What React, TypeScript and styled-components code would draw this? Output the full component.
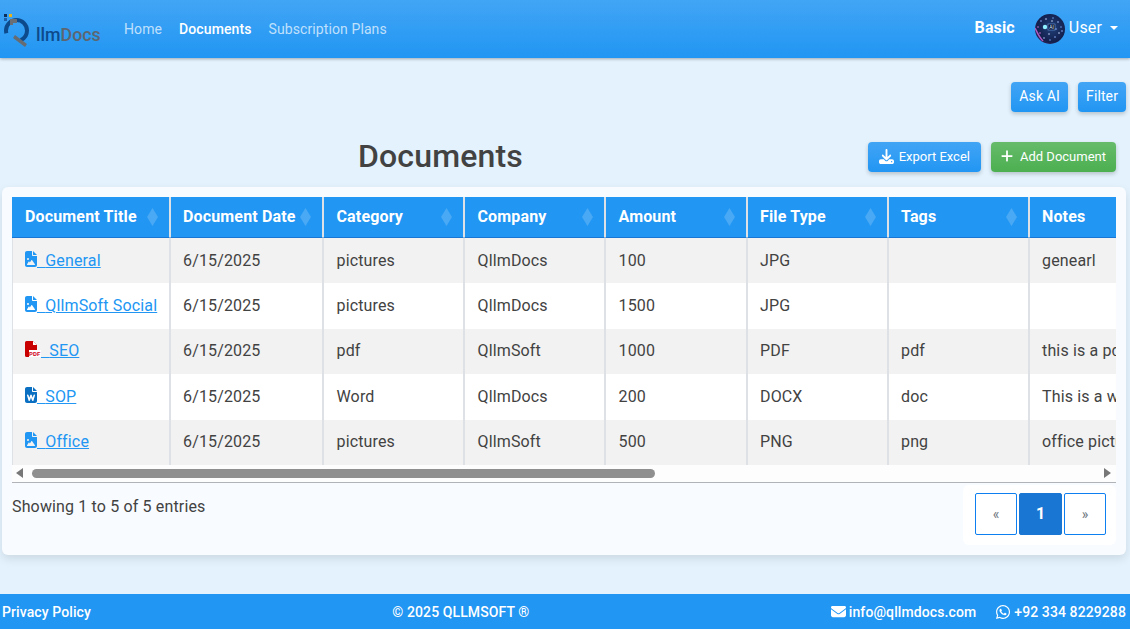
import React from "react";
import styled, { createGlobalStyle } from "styled-components";
import { FaDownload, FaEnvelope, FaFileImage, FaFileWord, FaPlus, FaWhatsapp } from "react-icons/fa6";

const Global = createGlobalStyle`
  html, body { margin: 0; padding: 0; height: 100%; overflow: hidden; }
  body { font-family: Roboto, "Liberation Sans", sans-serif; background: #e3f2fd; color: #424242; letter-spacing: .15px; }
  #root { height: 629px; }
  * { box-sizing: border-box; }
`;

const Page = styled.div`
  display: flex; flex-direction: column; height: 629px; width: 1130px;
`;
const Header = styled.header`
  height: 58px; flex: none; display: flex; align-items: center; padding: 0 12px 0 3px;
  background: linear-gradient(180deg, #42a5f5, #2196f3);
  box-shadow: 0 1px 3px rgba(0,0,0,.3);
`;
const Logo = styled.div`
  display: flex; align-items: flex-end; width: 97px; height: 36px; position: relative;
`;
const LogoText = styled.span`
  font-size: 17.8px; font-weight: 500; line-height: 1; margin-left: 33px; margin-bottom: 3px; color: #0d4a8c; letter-spacing: 0;
  & b { font-weight: 500; color: #5d6670; }
`;
const LogoMark = styled.svg`
  position: absolute; left: 0; top: 0;
`;
const Nav = styled.nav`
  display: flex; gap: 17px; margin-left: 24px; font-size: 14px; font-weight: 400;
`;
const NavLink = styled.a<{ $active?: boolean }>`
  color: ${(p) => (p.$active ? "#ffffff" : "rgba(255,255,255,.7)")};
  font-weight: ${(p) => (p.$active ? 500 : 400)};
  letter-spacing: .1px;
`;
const HeaderRight = styled.div`
  margin-left: auto; display: flex; align-items: center; color: #fff;
`;
const Plan = styled.span`
  font-weight: 700; font-size: 16px; margin-right: 20px; padding-bottom: 3px;
`;
const Avatar = styled.svg`
  width: 30px; height: 30px; border-radius: 50%; margin-right: 4px; display: block;
`;
const UserName = styled.span`
  font-size: 16px; margin-right: 8px; padding-bottom: 3px;
`;
const Caret = styled.span`
  width: 0; height: 0; margin-bottom: 3px; border-left: 4.5px solid transparent; border-right: 4.5px solid transparent; border-top: 4.5px solid #fff;
`;
const Main = styled.main`
  flex: 1; padding: 24px 4px 0 2px; display: flex; flex-direction: column;
`;
const TopActions = styled.div`
  display: flex; justify-content: flex-end; gap: 10px;
`;
const Btn = styled.button<{ $green?: boolean }>`
  height: 30px; border: none; border-radius: 4px; padding: 0 8px 2px; color: #fff; font-family: inherit;
  font-size: 14px; font-weight: 400; letter-spacing: .1px; display: inline-flex; align-items: center; justify-content: center; gap: 6px;
  background: ${(p) => (p.$green ? "linear-gradient(180deg,#66bb6a,#4caf50)" : "linear-gradient(180deg,#42a5f5,#2196f3)")};
  box-shadow: 0 2px 4px rgba(0,0,0,.2);
`;
const AskButton = styled(Btn)`
  min-width: 57px;
`;
const ExportButton = styled(Btn)`
  font-size: 13px; letter-spacing: 0; padding: 0 11px 2px; gap: 5px;
  & svg { flex: none; }
`;
const AddButton = styled(Btn)`
  font-size: 13px; letter-spacing: 0; padding: 0 10px 2px 9px;
  & svg { flex: none; }
`;
const TitleRow = styled.div`
  display: flex; align-items: center; margin-top: 30px; padding-right: 10px; height: 30px;
`;
const Title = styled.h1`
  margin: 0 0 2px 356px; font-size: 32px; font-weight: 500; color: #424242; line-height: 30px;
`;
const TitleActions = styled.div`
  margin-left: auto; display: flex; gap: 10px;
`;
const Card = styled.section`
  margin-top: 15px; height: 368px; background: #f8fbff; border-radius: 6px; padding: 10px;
  box-shadow: 0 4px 10px rgba(0,0,0,.1);
`;
const TableClip = styled.div`
  overflow: hidden; width: 1104px; background: #fff;
`;
const Table = styled.table`
  border-collapse: separate; border-spacing: 0; table-layout: fixed; width: 1258px;
`;
const Th = styled.th`
  height: 41px; padding: 0 11px 2px 12px; background: #2196f3; color: #fff; font-size: 16px; font-weight: 700; text-align: left;
  border-left: 1px solid #dee2e6; border-right: 1px solid #dee2e6; border-bottom: 1px solid #1976d2;
  &:first-child { border-left: none; padding-left: 13px; }
  &:nth-child(n+3):nth-child(-n+5) { padding-left: 12.5px; }
`;
const ThInner = styled.div`
  display: flex; align-items: center; justify-content: space-between;
`;
const SortIcon = styled.span`
  width: 11px; height: 18px; flex: none; background: rgba(255,255,255,.18); margin-top: 2px;
  clip-path: polygon(50% 0, 100% 50%, 50% 100%, 0 50%);
`;
const Row = styled.tr<{ $odd?: boolean }>`
  background: ${(p) => (p.$odd ? "#f2f2f2" : "#ffffff")};
`;
const Td = styled.td`
  height: 45.4px; padding: 0 12px 1px 12px; font-size: 16px; color: #424242; white-space: nowrap; overflow: hidden;
  border-left: 1px solid #dee2e6; border-right: 1px solid #dee2e6;
  &:nth-child(n+3):nth-child(-n+5) { padding-left: 12.5px; }
`;
const DocLink = styled.a`
  color: #2196f3; text-decoration: underline; white-space: pre;
  & svg { vertical-align: -1px; width: 12px; height: 16px; }
`;
const PdfGlyph = styled.svg`
  vertical-align: -2px;
  a & { width: 16px; height: 16px; }
`;
const ScrollBar = styled.div`
  display: flex; align-items: center; height: 17px; width: 1104px; background: #fdfdfd;
`;
const ArrowLeft = styled.span`
  width: 0; height: 0; margin-left: 4px; border-top: 5px solid transparent; border-bottom: 5px solid transparent; border-right: 7px solid #777;
`;
const Thumb = styled.div`
  width: 623px; height: 9px; margin-left: 9px; border-radius: 5px; background: #8f8f8f;
`;
const ArrowRight = styled.span`
  width: 0; height: 0; margin-left: auto; margin-right: 5px; border-top: 5px solid transparent; border-bottom: 5px solid transparent; border-left: 7px solid #777;
`;
const Foot = styled.div`
  width: 1104px; border-top: 1px solid #b0b4b8; display: flex; justify-content: space-between; align-items: flex-start;
`;
const Info = styled.div`
  font-size: 16px; color: #424242; margin-top: 14px;
`;
const Pager = styled.div`
  display: flex; gap: 2px; padding: 8px 10px 10px 12px; margin-top: 2px; background: #fff; border-radius: 6px;
`;
const PageBtn = styled.button<{ $active?: boolean }>`
  width: ${(p) => (p.$active ? "43px" : "42px")}; height: 42px; border-radius: 2px; font-family: inherit; padding: 0;
  border: 1px solid ${(p) => (p.$active ? "#1976d2" : "#0d7ff0")};
  background: ${(p) => (p.$active ? "#1976d2" : "#fff")};
  color: ${(p) => (p.$active ? "#fff" : "#6c757d")};
  font-size: ${(p) => (p.$active ? "16px" : "14px")};
  font-weight: ${(p) => (p.$active ? 700 : 400)};
`;
const Footer = styled.footer`
  flex: none; height: 35px; background: #2196f3; color: #fff; display: flex; align-items: center;
  justify-content: space-between; padding: 0 4px 0 2px; font-size: 14px; font-weight: 500; letter-spacing: .1px;
`;
const Contacts = styled.div`
  display: flex; gap: 19px;
`;
const Contact = styled.span`
  display: inline-flex; align-items: center; gap: 3px;
`;

const PdfIcon = () => (
  <PdfGlyph viewBox="0 0 16 16">
    <path d="M1.5 0H8l4 4v12H1.5A1.5 1.5 0 0 1 0 14.5v-13A1.5 1.5 0 0 1 1.5 0z" fill="#c90000" />
    <path d="M8 0l4 4H8z" fill="#fff" />
    <rect x="4" y="9" width="12" height="7" fill="#fff" />
    <text x="4" y="15.4" fontSize="6" fontWeight="700" fill="#d0021b" fontFamily="Roboto, sans-serif">PDF</text>
  </PdfGlyph>
);

const WordIcon = () => <FaFileWord color="#0b6fc2" />;
const ImgIcon = () => <FaFileImage color="#2196f3" />;

const columns = [
  ["Document Title", 158],
  ["Document Date", 153],
  ["Category", 141],
  ["Company", 141],
  ["Amount", 142],
  ["File Type", 141],
  ["Tags", 141],
  ["Notes", 241],
] as const;

const rows = [
  { icon: <ImgIcon />, title: "General", cat: "pictures", co: "QllmDocs", amt: "100", type: "JPG", tags: "", notes: "genearl" },
  { icon: <ImgIcon />, title: "QllmSoft Social", cat: "pictures", co: "QllmDocs", amt: "1500", type: "JPG", tags: "", notes: "" },
  { icon: <PdfIcon />, title: "SEO", cat: "pdf", co: "QllmSoft", amt: "1000", type: "PDF", tags: "pdf", notes: "this is a pdf file" },
  { icon: <WordIcon />, title: "SOP", cat: "Word", co: "QllmDocs", amt: "200", type: "DOCX", tags: "doc", notes: "This is a word file" },
  { icon: <ImgIcon />, title: "Office", cat: "pictures", co: "QllmSoft", amt: "500", type: "PNG", tags: "png", notes: "office pictures" },
];

const stars = [
  [6, 7, "#8fb4ff"], [11, 5, "#c8d8ff"], [18, 4, "#6f9be8"], [23, 8, "#a9c6ff"], [26, 13, "#6f9be8"],
  [24, 19, "#c8d8ff"], [20, 23, "#8fb4ff"], [15, 26, "#6f9be8"], [9, 24, "#a9c6ff"], [5, 19, "#d070d8"],
  [3, 13, "#d070d8"], [14, 20, "#c8d8ff"], [21, 15, "#8fb4ff"], [17, 7, "#c8d8ff"], [27, 17, "#8fb4ff"],
] as const;

export default function App() {
  return (
    <Page>
      <Global />
      <Header>
        <Logo>
          <LogoMark width="30" height="36" viewBox="0 0 30 36">
            <rect x="1" y="3" width="3" height="3" fill="#0d2f5c" />
            <rect x="6" y="3" width="3" height="3" fill="#e8b21a" />
            <rect x="1" y="7" width="3" height="3" fill="#1d5fa8" />
            <circle cx="13.5" cy="19.5" r="10.5" fill="none" stroke="#0d4a8c" strokeWidth="4" strokeDasharray="48 18" strokeDashoffset="-30" />
            <path d="M7 8h7v4H10v2H7z" fill="#6a6f75" />
            <path d="M12 24l12 9-2 3-12-9z" fill="#666c72" />
          </LogoMark>
          <LogoText>llm<b>Docs</b></LogoText>
        </Logo>
        <Nav>
          <NavLink>Home</NavLink>
          <NavLink $active>Documents</NavLink>
          <NavLink>Subscription Plans</NavLink>
        </Nav>
        <HeaderRight>
          <Plan>Basic</Plan>
          <Avatar viewBox="0 0 30 30">
            <defs>
              <radialGradient id="av" cx="55%" cy="45%" r="65%">
                <stop offset="0%" stopColor="#20407a" />
                <stop offset="75%" stopColor="#131f4c" />
                <stop offset="100%" stopColor="#4a2a66" />
              </radialGradient>
            </defs>
            <rect width="30" height="30" fill="url(#av)" />
            {stars.map(([x, y, c]) => <circle key={`${x}-${y}`} cx={x} cy={y} r=".8" fill={c} />)}
            <path d="M0 14c2 4 4 9 8 13" stroke="#b05ac0" strokeWidth="1.6" fill="none" />
            <circle cx="10" cy="13" r="2.2" fill="#8ff0ff" />
            <rect x="13" y="10" width="7" height="6" fill="#0a1030" stroke="#6fa0e0" strokeWidth=".6" />
            <text x="14.2" y="15" fontSize="5" fill="#d8ecff" fontFamily="Roboto, sans-serif">AI</text>
          </Avatar>
          <UserName>User</UserName>
          <Caret />
        </HeaderRight>
      </Header>
      <Main>
        <TopActions>
          <AskButton>Ask AI</AskButton>
          <Btn>Filter</Btn>
        </TopActions>
        <TitleRow>
          <Title>Documents</Title>
          <TitleActions>
            <ExportButton><FaDownload size={15} />Export Excel</ExportButton>
            <AddButton $green><FaPlus size={14} />Add Document</AddButton>
          </TitleActions>
        </TitleRow>
        <Card>
          <TableClip>
            <Table>
              <colgroup>
                {columns.map(([name, w]) => <col key={name} width={w} />)}
              </colgroup>
              <thead>
                <tr>
                  {columns.map(([name]) => (
                    <Th key={name}><ThInner>{name}<SortIcon /></ThInner></Th>
                  ))}
                </tr>
              </thead>
              <tbody>
                {rows.map((r, i) => (
                  <Row key={r.title} $odd={i % 2 === 0}>
                    <Td><DocLink>{r.icon}{"  "}{r.title}</DocLink></Td>
                    <Td>6/15/2025</Td>
                    <Td>{r.cat}</Td>
                    <Td>{r.co}</Td>
                    <Td>{r.amt}</Td>
                    <Td>{r.type}</Td>
                    <Td>{r.tags}</Td>
                    <Td>{r.notes}</Td>
                  </Row>
                ))}
              </tbody>
            </Table>
          </TableClip>
          <ScrollBar>
            <ArrowLeft />
            <Thumb />
            <ArrowRight />
          </ScrollBar>
          <Foot>
            <Info>Showing 1 to 5 of 5 entries</Info>
            <Pager>
              <PageBtn>«</PageBtn>
              <PageBtn $active>1</PageBtn>
              <PageBtn>»</PageBtn>
            </Pager>
          </Foot>
        </Card>
      </Main>
      <Footer>
        <span>Privacy Policy</span>
        <span>© 2025 QLLMSOFT ®</span>
        <Contacts>
          <Contact><FaEnvelope size={15} />info@qllmdocs.com</Contact>
          <Contact><FaWhatsapp size={16} />+92 334 8229288</Contact>
        </Contacts>
      </Footer>
    </Page>
  );
}
